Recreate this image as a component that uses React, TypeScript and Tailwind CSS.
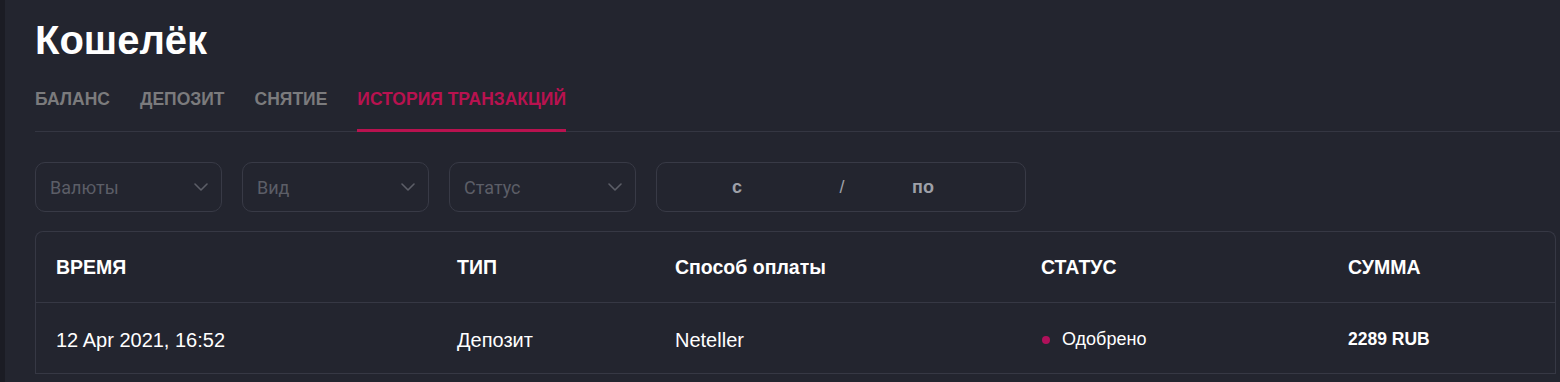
import React from "react"

type Transaction = {
    time: string,
    type: string,
    method: string,
    status: string,
    amount: string
}

const tabs = ["БАЛАНС", "ДЕПОЗИТ", "СНЯТИЕ", "ИСТОРИЯ ТРАНЗАКЦИЙ"]

const transactions: Transaction[] = [
    { time: "12 Apr 2021, 16:52", type: "Депозит", method: "Neteller", status: "Одобрено", amount: "2289 RUB" },
]

function Chevron() {
    return (
        <svg width="14" height="8" viewBox="0 0 14 8" fill="none">
            <polyline points="1,1 7,7 13,1" stroke="#5c5e67" strokeWidth="1.6" strokeLinecap="round" strokeLinejoin="round" />
        </svg>
    )
}

function Select({ label }: { label: string }) {
    return (
        <div className="flex h-[50px] w-[187px] items-center justify-between rounded-[10px] border border-[#383a46] pl-[14px] pr-[13px]">
            <span className="font-['Roboto',sans-serif] text-[18px] text-[#5c5e67]">{label}</span>
            <Chevron />
        </div>
    )
}

function App() {
    const grid = "grid grid-cols-[401px_218px_366px_307px_1fr] items-center"

    return (
        <div className="flex min-h-screen bg-[#23252f] font-['Liberation_Sans',Arial,sans-serif]">
            <div className="w-[5px] shrink-0 bg-[#1b1c24]" />

            <div className="flex-1 pl-[30px] pt-[20px]">
                <h1 className="text-[40px] font-bold leading-[40px] text-white">Кошелёк</h1>

                <div className="mt-[31px] flex gap-[30px] border-b border-[#343642]">
                    {tabs.map((tab, i) => (
                        <div
                            key={tab}
                            className={
                                i === 3
                                    ? "-mb-px border-b-[3px] border-[#b8124f] pb-[21px] text-[17.5px] font-bold leading-[17px] text-[#b8124f]"
                                    : "-mb-px border-b-[3px] border-transparent pb-[21px] text-[17.5px] font-bold leading-[17px] text-[#7b7b7d]"
                            }
                        >
                            {tab}
                        </div>
                    ))}
                </div>

                <div className="mt-[30px] flex gap-[20px]">
                    <Select label="Валюты" />
                    <Select label="Вид" />
                    <Select label="Статус" />
                    <div className="flex h-[50px] w-[370px] items-center rounded-[10px] border border-[#383a46] text-[18px] font-bold text-[#9ea0a8]">
                        <div className="w-[160px] text-center">с</div>
                        <div className="w-[50px] text-center font-normal">/</div>
                        <div className="w-[112px] text-center">по</div>
                    </div>
                </div>

                <div className="mr-[4px] mt-[19px] rounded-t-[8px] border border-b-0 border-[#363844]">
                    <div className={`${grid} h-[71px] border-b border-[#363844] pt-[1px] text-[19.5px] font-bold text-white`}>
                        <div className="pl-[20px]">ВРЕМЯ</div>
                        <div className="pl-[20px]">ТИП</div>
                        <div className="pl-[20px]">Способ оплаты</div>
                        <div className="pl-[20px]">СТАТУС</div>
                        <div className="pl-[20px]">СУММА</div>
                    </div>

                    {transactions.map(item => (
                        <div key={item.time} className={`${grid} h-[71px] border-b border-[#363844] pt-[3px] text-white`}>
                            <div className="pl-[20px] text-[20px]">{item.time}</div>
                            <div className="pl-[20px] text-[20px]">{item.type}</div>
                            <div className="pl-[20px] text-[20px]">{item.method}</div>
                            <div className="flex items-center gap-[12px] pl-[21px] text-[18px]">
                                <span className="h-[8px] w-[8px] rounded-full bg-[#b0105a]" />
                                {item.status}
                            </div>
                            <div className="pl-[20px] text-[17.5px] font-bold">{item.amount}</div>
                        </div>
                    ))}
                </div>
            </div>
        </div>
    )
}

export default App
